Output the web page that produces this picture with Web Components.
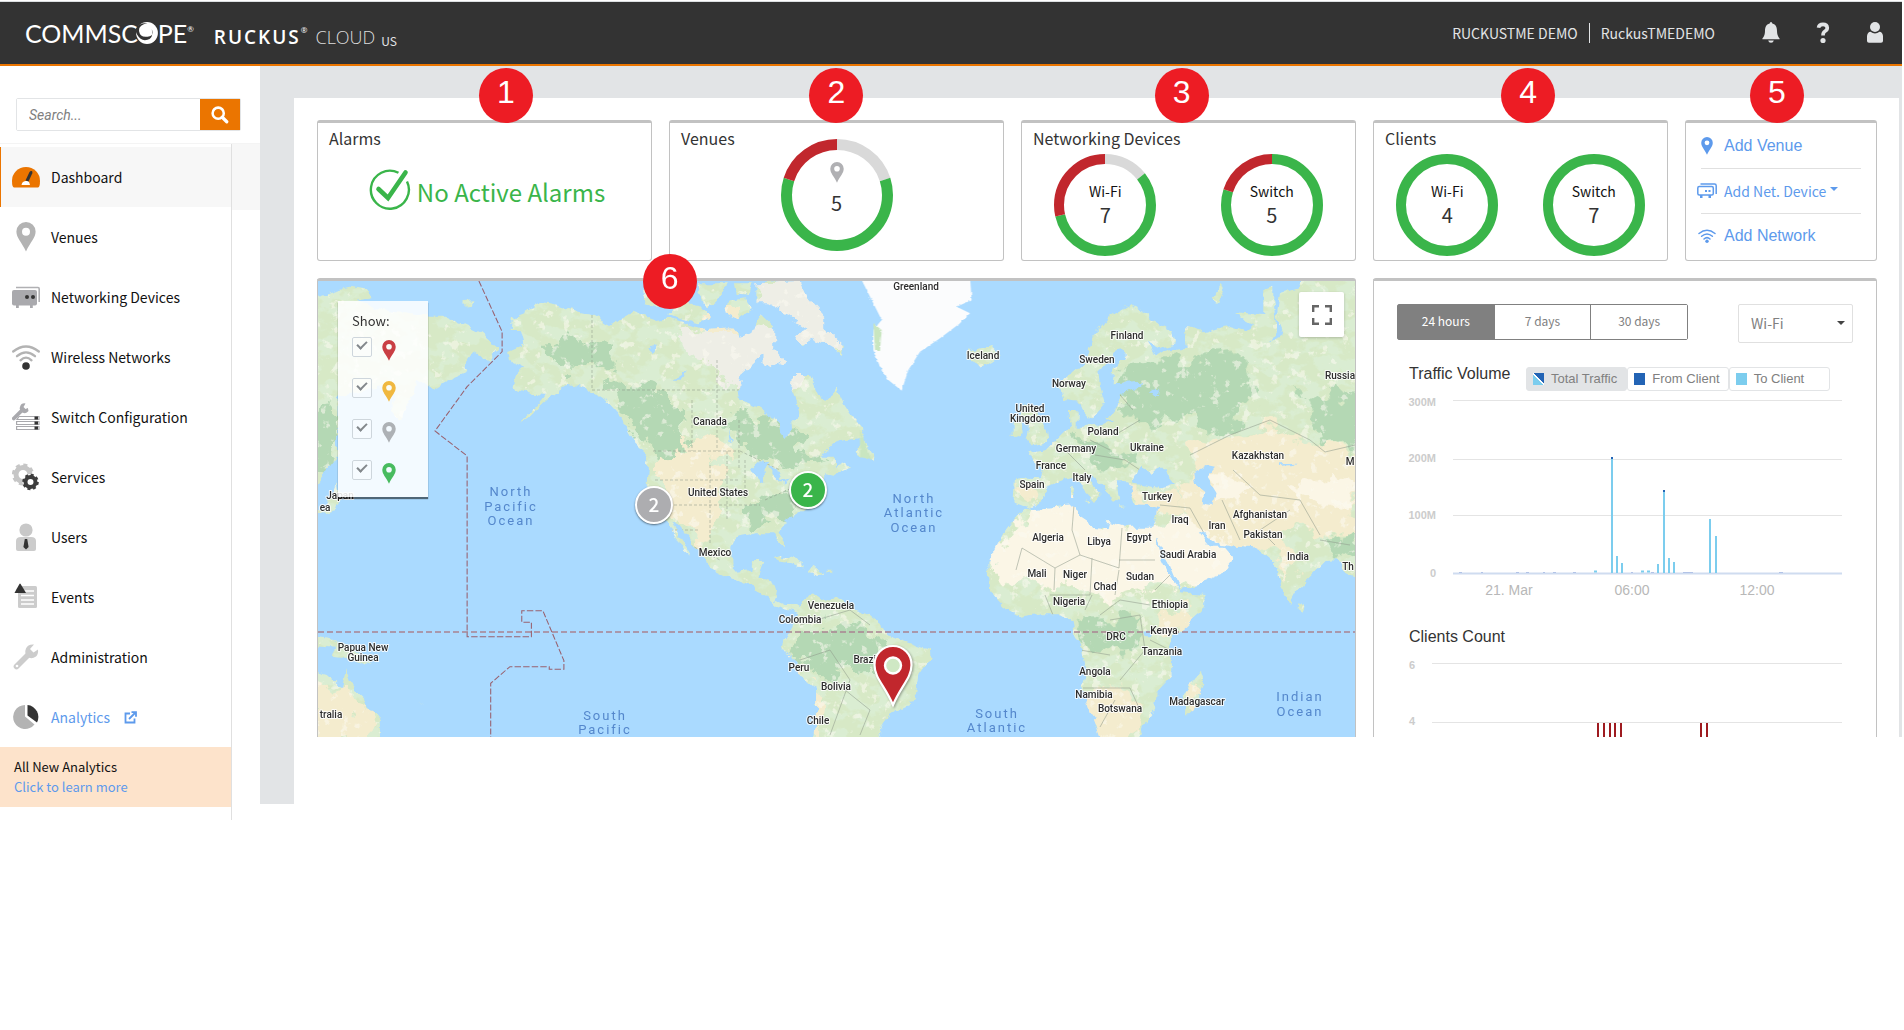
<!DOCTYPE html>
<html lang="en">
<head>
<meta charset="utf-8">
<title>Ruckus Cloud Dashboard</title>
<style>
  :root {
    --ui: "Noto Sans CJK SC", "Noto Sans", sans-serif;
    --plain: "Liberation Sans", Arial, sans-serif;
    --orange: #eb7500;
    --green: #3ab54a;
    --red: #c1272d;
    --link: #5d9aec;
    --edge: #c2c2c2;
    --shade: #e2e4e6;
  }
  body { margin: 0; padding-right: 2px; background: #fff; font-family: var(--ui); font-size: 14px; line-height: 20px; color: #333; }
</style>
</head>
<body>
<ruckus-app></ruckus-app>

<script>
const ICONS = {
  search: ['0 0 20 20', '<circle cx="8" cy="8" r="6.2" fill="none" stroke="#fff" stroke-width="2.8"/><path d="M12.5 12.500l5 5" stroke="#fff" stroke-width="3.6" stroke-linecap="round"/>'],
  dashboard: ['0 0 28 28', '<path d="M2 24.500Q0 24 0 18A14 14 0 0 1 28 18Q28 24 26 24.500z" fill="#eb7500"/><path d="M9.500 22q.5-3.500 4-4h2.500q1.500 1 2 4z" fill="#fff"/><path d="M13.500 17.500l4-8.500q1-1.500 2.200-1t.6 2.200l-3.800 8.300z" fill="#333"/>'],
  pin: ['0 0 20 30', '<path fill-rule="evenodd" d="M10 0a9.600 9.600 0 0 1 9.600 9.600C19.600 16 14.500 20 10 29.500 5.500 20 .4 16 .4 9.600A9.600 9.600 0 0 1 10 0zm0 5.700a4 4 0 1 0 0 8 4 4 0 0 0 0-8z" fill="currentColor"/>'],
  devices: ['0 0 28 28', '<path d="M4 4.500h22q1.200 0 1.200 1.500v13" fill="none" stroke="#b0b0b3" stroke-width="1.600"/><rect y="7" width="25" height="15.500" rx="2" fill="#a9a9ad"/><path d="M4 22h2.800v3H4zM18 22h2.800v3H18z" fill="#a9a9ad"/><circle cx="15" cy="14" r="2" fill="#333"/><circle cx="21" cy="14" r="2" fill="#333"/>'],
  wireless: ['0 0 28 28', '<g fill="none" stroke="#b3b3b3" stroke-linecap="round" stroke-width="2.300"><path d="M1.200 8.500Q14-1.500 26.800 8.500"/><path d="M5 13.200Q14 5.500 23 13.200"/><path d="M8.500 17.300Q14 12 19.500 17.300"/></g><circle cx="14" cy="23" r="3.800" fill="#333"/>'],
  switch: ['0 0 28 28', '<path d="M1.800 15.500l8-8" stroke="#a9a9ad" stroke-width="3.800" stroke-linecap="round"/><path d="M13.500.5a4.800 4.800 0 1 0 3 7.500l-.6-3-2.400 1-2-2z" fill="#a9a9ad"/><g fill="#fff" stroke="#a9a9ad" stroke-width="1.200"><path d="M7 13.500h20v3H5z"/><path d="M4.600 18.500H27v3H4.600zM4.600 23.500H27v3H4.600z"/></g><path d="M22.500 13.500h3.500v3h-3.500zM22.500 18.500h3.500v3h-3.500zM22.500 23.500h3.500v3h-3.500z" fill="#333"/>'],
  services: ['0 0 28 28', '<circle cx="11" cy="11.500" r="7" fill="none" stroke="#c6c6c6" stroke-width="5"/><circle cx="11" cy="11.500" r="9.800" fill="none" stroke="#c6c6c6" stroke-width="2.600" stroke-dasharray="4.100 3.600"/><circle cx="18.500" cy="19" r="8" fill="#fff"/><circle cx="18.500" cy="19" r="5" fill="none" stroke="#3d3d3d" stroke-width="4"/><circle cx="18.500" cy="19" r="7.200" fill="none" stroke="#3d3d3d" stroke-width="2.200" stroke-dasharray="3 2.650"/>'],
  users: ['0 0 28 28', '<circle cx="14" cy="7" r="6.600" fill="#c8c8c8"/><path d="M4 18q0-4 5-4h10q5 0 5 4v8q0 2-2 2H6q-2 0-2-2z" fill="#ccc"/><path d="M12.800 16h2.400l1.400 8-2.600 2.500L11.400 24z" fill="#333"/>'],
  events: ['0 0 28 28', '<rect x="6" y="3" width="19" height="22" rx="1.500" fill="#ccc"/><path d="M9 8h13M9 12.500h13M9 17h13M9 21h13" stroke="#fff" stroke-width="1.700"/><path d="M8 .5q.6 0 6 9.500H2.500Q7.400.5 8 .5z" fill="#333"/>'],
  admin: ['0 0 28 28', '<path d="M4.500 23.500L17 11" stroke="#ccc" stroke-width="5.600" stroke-linecap="round"/><path d="M22 1.500q-6-.6-8 4t1.500 8 8.500 0q2.500-2.500 2-7l-4.500 3-3.500-3.500z" fill="#ccc"/><circle cx="5" cy="23" r="1.300" fill="#fff"/>'],
  analytics: ['0 0 28 28', '<path d="M13 2a12 12 0 1 0 9.500 19.500L13 13.500z" fill="#b3b3b3"/><path d="M15.500 2A12 12 0 0 1 25 19.500l-9.500-7z" fill="#333"/>'],
  external: ['0 0 13 13', '<path d="M6 2.500H1.500v9h9V7.500" fill="none" stroke="#5d9aec" stroke-width="1.800"/><path d="M5 8l6-6M7.500 1.200H12v4.500" fill="none" stroke="#5d9aec" stroke-width="1.800"/>'],
  bell: ['0 0 18 22', '<path d="M9 0q1.200 0 1.300 1.600C14 2.500 15 5.500 15 9q0 5 2.600 7.500v.8H.4v-.8Q3 14 3 9c0-3.500 1-6.500 4.700-7.400Q7.800 0 9 0z" fill="#e2e4e6"/><path d="M6.200 18.500h5.600q-.5 2.300-2.800 2.300t-2.800-2.300z" fill="#e2e4e6"/>'],
  help: ['0 0 14 22', '<path d="M2.500 5.800Q3 2.400 7 2.400t4.300 3.400Q11.300 8 9 9.300 7 10.400 7 13.500" fill="none" stroke="#e2e4e6" stroke-width="3.600"/><circle cx="7" cy="18.500" r="2.600" fill="#e2e4e6"/>'],
  user: ['0 0 18 22', '<circle cx="9" cy="5" r="5" fill="#e2e4e6"/><path d="M1 14q.5-4 3.500-4.200Q9 13 13.500 9.800 16.500 10 17 14v5q0 1.800-2 1.800H3Q1 20.800 1 19z" fill="#e2e4e6"/>'],
  check: ['0 0 42 42', '<path d="M29.500 3.800A19 19 0 1 0 38 12.500" fill="none" stroke="#3ab54a" stroke-width="2.400"/><path d="M9.500 20l9.500 9L36.500 3.500" fill="none" stroke="#3ab54a" stroke-width="4.600" stroke-linecap="round"/>'],
  addDevice: ['0 0 20 16', '<g fill="none" stroke="#5d9aec" stroke-width="1.500"><path d="M3.500 1h14q1.700 0 1.700 1.700V11"/><rect x=".8" y="3.500" width="15.500" height="8.500" rx="1.500"/></g><path d="M3 12h2.500v3H3zM11.500 12H14v3h-2.500zM8 7h2v2H8zM11.500 7h2v2h-2z" fill="#5d9aec"/>'],
  addWifi: ['0 0 18 14', '<g fill="none" stroke="#5d9aec" stroke-linecap="round" stroke-width="1.500"><path d="M1 4.500Q9-2 17 4.500"/><path d="M3.600 7.300Q9 2.600 14.400 7.300"/><path d="M6 10Q9 7.200 12 10"/></g><circle cx="9" cy="12.200" r="1.700" fill="#5d9aec"/>'],
  full: ['0 0 20 20', '<path d="M1.200 7V1.200H7M13 1.200h5.800V7M18.800 13v5.800H13M7 18.800H1.200V13" fill="none" stroke="#666" stroke-width="2.400"/>'],
  marker: ['0 0 42 66', '<path d="M21 2A18.500 18.500 0 0 1 39.500 21C39.500 34 29 42 21 61 13 42 2.500 34 2.500 21A18.500 18.500 0 0 1 21 2z" fill="#c1272d" stroke="#fff" stroke-width="2.200"/><circle cx="21" cy="21.500" r="8" fill="#cfe8c4" stroke="#fff" stroke-width="2.400"/>']
};

const define = (name, html, setup) => customElements.define(name, class extends HTMLElement {
  connectedCallback() {
    if (this.shadowRoot) return;
    const root = this.attachShadow({ mode: 'open' });
    root.innerHTML = typeof html === 'function' ? html(this) : html;
    if (setup) setup(root, this);
  }
});

define('rk-icon', el => {
  const [box, body] = ICONS[el.getAttribute('name')];
  return `<style>:host{display:inline-flex;flex:none}svg{display:block;width:100%;height:100%}</style>
    <svg viewBox="${box}" aria-hidden="true">${body}</svg>`;
});

define('rk-header', `
<style>
  :host { display: block; border-top: 1px solid #dcdfe1; margin-top: 1px; }
  header { display: flex; align-items: center; height: 62px; background: #333; border-bottom: 2px solid var(--orange); color: #fff; padding: 0 18px 0 25px; box-sizing: content-box; }
  .brand { position: relative; font: 25px/30px Lato, sans-serif; margin-top: -1px; }
  .brand svg { position: absolute; left: 111px; top: 4px; width: 22px; height: 22px; }
  sup { font-size: 8px; line-height: 8px; vertical-align: 11px; font-weight: 400; letter-spacing: 0; }
  .product { display: flex; align-items: baseline; margin-left: 20px; padding-top: 7px; }
  .product b { font: 600 19px/24px "Open Sans", sans-serif; letter-spacing: 2px; }
  .product span { font: 300 18px/24px "Open Sans", sans-serif; margin-left: 8px; color: #ddd; }
  .product small { font: 12px/14px var(--ui); margin-left: 6px; padding-top: 2px; color: #e2e4e6; align-self: center; position: relative; top: 3px; }
  .account { margin-left: auto; display: flex; align-items: center; color: #e2e4e6; }
  .account span { padding: 0 11px; line-height: 20px; }
  .account span + span { border-left: 1px solid #e2e4e6; }
  button { background: none; border: 0; padding: 0; display: flex; }
  nav { display: flex; align-items: center; gap: 36px; margin-left: 36px; }
</style>
<header>
  <div class="brand">COMMSCOPE<sup>®</sup>
    <svg viewBox="0 0 21 21" aria-hidden="true"><circle cx="10.500" cy="10.500" r="10.400" fill="#fff"/><path d="M11 1Q2 3 3 9t8 5 4-7q2 8-4 10T1 12 6 1.500z" fill="#333"/></svg>
  </div>
  <div class="product"><b>RUCKUS<sup>®</sup></b><span>CLOUD</span><small>US</small></div>
  <div class="account"><span>RUCKUSTME DEMO</span><span>RuckusTMEDEMO</span></div>
  <nav>
    <button aria-label="Notifications"><rk-icon name="bell" style="width:18px;height:22px"></rk-icon></button>
    <button aria-label="Help"><rk-icon name="help" style="width:14px;height:22px"></rk-icon></button>
    <button aria-label="Account"><rk-icon name="user" style="width:18px;height:22px"></rk-icon></button>
  </nav>
</header>`);

define('rk-nav-item', el => `
<style>
  :host { display: block; }
  a { display: flex; align-items: center; height: 60px; padding-left: 11px; gap: 11px; border-left: 1px solid transparent; color: #111; text-decoration: none; }
  :host([active]) a { background: #f7f7f7; border-left-color: var(--orange); }
  :host([external]) a { color: var(--link); }
  .box { width: 28px; height: 30px; display: flex; align-items: center; justify-content: center; color: #b3b3b3; }
</style>
<a href="#"><span class="box"><rk-icon name="${el.getAttribute('icon')}" style="${el.getAttribute('icon') === 'pin' ? 'width:20px;height:30px' : 'width:28px;height:28px'}"></rk-icon></span>
<slot></slot>${el.hasAttribute('external') ? '<rk-icon name="external" style="width:13px;height:13px;margin-left:3px"></rk-icon>' : ''}</a>`);

define('rk-sidebar', `
<style>
  :host { display: block; width: 260px; flex: none; }
  form { display: flex; height: 31px; margin: 32px 19px 12px 16px; border: 1px solid #e2e4e6; border-radius: 2px; }
  input { flex: 1; min-width: 0; border: 0; padding: 0 12px; outline: 0; font: italic 14px/20px Roboto, sans-serif; }
  input::placeholder { color: #808080; opacity: 1; }
  form button { width: 40px; border: 0; padding: 0; background: var(--orange); display: flex; align-items: center; justify-content: center; }
  .rail { display: flex; align-items: flex-start; border-top: 1px solid #f4f4f4; }
  nav { flex: 1; border-right: 1px solid #e0e0e0; padding: 3px 0 13px; }
  .tab { width: 28px; height: 66px; background: #f7f7f7; }
  .promo { background: #fde3cb; height: 60px; box-sizing: border-box; padding: 10px 14px; font-size: 13px; line-height: 20px; color: #111; }
  .promo a { display: block; color: var(--link); text-decoration: none; }
</style>
<form onsubmit="return false"><input type="text" aria-label="Search" placeholder="Search..."><button aria-label="Run search"><rk-icon name="search" style="width:18px;height:18px"></rk-icon></button></form>
<div class="rail"><nav>
  <rk-nav-item icon="dashboard" active>Dashboard</rk-nav-item>
  <rk-nav-item icon="pin">Venues</rk-nav-item>
  <rk-nav-item icon="devices">Networking Devices</rk-nav-item>
  <rk-nav-item icon="wireless">Wireless Networks</rk-nav-item>
  <rk-nav-item icon="switch">Switch Configuration</rk-nav-item>
  <rk-nav-item icon="services">Services</rk-nav-item>
  <rk-nav-item icon="users">Users</rk-nav-item>
  <rk-nav-item icon="events">Events</rk-nav-item>
  <rk-nav-item icon="admin">Administration</rk-nav-item>
  <rk-nav-item icon="analytics" external>Analytics</rk-nav-item>
  <div class="promo">All New Analytics<a href="#">Click to learn more</a></div>
</nav><div class="tab"></div></div>`);

define('rk-card', el => `
<style>
  :host { display: flex; flex-direction: column; box-sizing: border-box; border: 1px solid var(--edge); border-top-width: 3px; border-radius: 3px; min-width: 0; position: relative; }
  :host([open]) { border-bottom: 0; border-radius: 3px 3px 0 0; }
  h2 { position: absolute; left: 11px; top: 5px; margin: 0; font-weight: 400; font-size: 16px; line-height: 20px; }
</style>
${el.hasAttribute('heading') ? `<h2>${el.getAttribute('heading')}</h2>` : ''}<slot></slot>`);

define('rk-donut', el => {
  const size = +el.getAttribute('size'), w = +el.getAttribute('ring'), r = (size - w) / 2, c = size / 2;
  let at = 0;
  const arcs = el.getAttribute('parts').split(' ').map(p => {
    const [color, share] = p.split(':');
    const arc = `<circle cx="${c}" cy="${c}" r="${r}" pathLength="1000" stroke="${color}" stroke-width="${w}" stroke-dasharray="${share} 1000" stroke-dashoffset="${-at}"/>`;
    at += +share;
    return arc;
  }).join('');
  return `<style>
    :host { display: grid; place-items: center; width: ${size}px; height: ${size}px; }
    svg, div { grid-area: 1 / 1; }
    g { transform: rotate(-90deg); transform-origin: center; fill: none; }
    div { display: flex; flex-direction: column; align-items: center; color: #111; line-height: 20px; padding-bottom: var(--lift, 0); }
    strong { font-weight: 400; font-size: 20px; line-height: 28px; color: #333; }
  </style>
  <svg width="${size}" height="${size}" aria-hidden="true"><g>${arcs}</g></svg>
  <div><slot></slot><strong>${el.getAttribute('value')}</strong></div>`;
});

define('rk-callout', `
<style>
  :host { position: absolute; left: var(--x); top: var(--y, -30px); transform: translateX(-50%); z-index: 5; width: 54px; height: 55px; border-radius: 50%; background: #ed1c24; color: #fff; text-align: center; font: 32px/48px var(--plain); }
</style><slot></slot>`);

define('rk-actions', `
<style>
  :host { display: flex; flex-direction: column; margin: 1px 15px 0; }
  div { display: flex; align-items: center; height: 44px; gap: 11px; }
  div:first-child { box-sizing: border-box; padding-top: 4px; }
  div + div { border-top: 1px solid #e0e0e0; }
  .lead { width: 12px; display: flex; justify-content: center; color: var(--link); }
  a, button { color: var(--link); text-decoration: none; font: 16px/20px var(--plain); background: none; border: 0; padding: 0; white-space: nowrap; }
  button { display: flex; align-items: center; gap: 4px; font: 14px/20px var(--ui); }
  i { border: 4px solid transparent; border-top-color: currentColor; border-bottom: 0; margin-top: -4px; }
</style>
<div><span class="lead"><rk-icon name="pin" style="width:12px;height:18px"></rk-icon></span><a href="#">Add Venue</a></div>
<div><span class="lead"><rk-icon name="addDevice" style="width:20px;height:16px"></rk-icon></span><button>Add Net. Device<i></i></button></div>
<div><span class="lead"><rk-icon name="addWifi" style="width:18px;height:14px"></rk-icon></span><a href="#">Add Network</a></div>`);

const COUNTRIES = [
  ['Canada',710,422],['United States',718,493],['Mexico',715,553],['Venezuela',831,606],['Colombia',800,620],['Peru',799,668],['Bolivia',836,687],['Brazil',866,660],['Chile',818,721],
  ['Papua New',363,648],['Guinea',363,658],['Japan',340,496],['Greenland',916,287],['Iceland',983,356],['Finland',1127,336],['Sweden',1097,360],['Norway',1069,384],
  ['United',1030,409],['Kingdom',1030,419],['Poland',1103,432],['Germany',1076,449],['Ukraine',1147,448],['France',1051,466],['Italy',1082,478],['Spain',1032,485],
  ['Kazakhstan',1258,456],['Turkey',1157,497],['Afghanistan',1260,515],['Iraq',1180,520],['Iran',1217,526],['Pakistan',1263,535],['India',1298,557],['Algeria',1048,538],
  ['Libya',1099,542],['Egypt',1139,538],['Saudi Arabia',1188,555],['Mali',1037,574],['Niger',1075,575],['Sudan',1140,577],['Chad',1105,587],['Nigeria',1069,602],
  ['Ethiopia',1170,605],['Kenya',1164,631],['DRC',1116,637],['Tanzania',1162,652],['Angola',1095,672],['Namibia',1094,695],['Botswana',1120,709],['Madagascar',1197,702],
  ['Russia',1340,376],['ea',325,508],['tralia',331,715],['M',1350,462],['Th',1348,567]
];
const OCEANS = [
  ['North',511,492],['Pacific',511,507],['Ocean',511,521],['South',605,716],['Pacific',605,730],['North',914,499],['Atlantic',914,513],['Ocean',914,528],
  ['South',997,714],['Atlantic',997,728],['Indian',1300,697],['Ocean',1300,712]
];
const label = ([t, x, y], dy) => `<text x="${x}" y="${y + dy}">${t}</text>`;

// Land west of the mid-Atlantic
const WEST = `
  M0 85L75 60 110 50 165 60 172 85 130 92 200 120 330 140 380 140 430 165 480 190 530 235 500 272 460 245 430 290 435 310 390 330 345 358 300 330 290 370 250 450 225 420 240 370 200 350 78 380 75 560 20 640 0 640z
  M85 690L75 720 50 725 0 745V735L45 712 78 640z
  M565 145L600 130 650 97 690 105 730 120 790 135 840 165 905 125 970 150 1010 145 1070 165 1110 180 1180 175 1200 200 1240 190 1262 130 1300 170 1300 230 1250 270 1210 310 1200 360 1205 390 1250 410 1310 450 1320 490 1335 507 1347 480 1345 450 1370 430 1365 400 1350 360 1355 315 1400 315 1415 350 1430 385 1455 390 1475 355 1495 400 1520 440 1550 480 1540 505 1500 510 1465 520 1430 560 1470 560 1470 590 1500 580 1515 590 1470 615 1440 610 1440 640 1400 690 1395 710 1370 730 1330 755 1312 785 1330 810 1330 835 1312 815 1300 790 1250 790 1195 800 1180 830 1180 880 1200 905 1235 900 1240 877 1272 875 1260 910 1255 925 1300 940 1305 960 1300 990 1330 1005 1360 1005 1375 1010 1405 970 1430 990 1480 985 1530 1020 1568 1035 1600 1060 1605 1090 1670 1115 1736 1140 1738 1165 1703 1220 1698 1270 1675 1305 1628 1330 1600 1380 1582 1420H1410L1420 1330 1420 1260 1380 1220 1350 1170 1325 1130 1345 1080 1370 1030 1330 1018 1310 1005 1280 975 1240 952 1190 930 1120 895 1100 860 1060 800 1035 765 1015 755 1035 800 1065 858 1040 835 1018 785 1005 755 980 735 960 700 940 650 945 560 935 545 910 520 880 460 865 430 840 400 790 365 750 350 720 345 690 365 650 400 620 440 585 458 620 425 650 390 660 375 610 370 570 350 580 310 600 290 560 270 555 240 600 220 590 180 562 180z
  M930 60L1000 40 1020 80 990 115 940 100zM1000 130L1040 95 1090 105 1120 140 1090 160 1040 150zM1090 40L1170 40 1150 80 1110 110 1085 70zM1170 95L1220 85 1240 120 1200 150 1160 130zM1190 40L1240 40 1230 75 1195 70z
  M1250 40L1370 33 1390 80 1440 140 1440 170 1495 225 1490 252 1440 220 1400 200 1380 230 1360 200 1390 175 1330 130 1280 100 1250 100zM1270 240L1300 235 1330 270 1290 295 1270 280z
  M1525 545L1550 510 1575 540 1580 570 1540 560z
  M1300 865L1320 858 1360 872 1388 892 1365 890 1335 876zM1395 905L1405 890 1435 905 1440 914 1410 914zM1452 905H1468V911H1452z
  M0 1095L60 1105 110 1130 170 1185 110 1165 60 1160 70 1130 0 1125z
  M0 1200L50 1215 90 1255 100 1195 125 1265 160 1300 195 1350 202 1420H0z
  M430 90L455 88 450 102 430 104zM300 1290L320 1305 312 1300z`;
// Land east of the mid-Atlantic
const EAST = `
  M460 700L465 625 540 628 545 600 505 550 560 540 590 510 620 480 635 465 630 420 650 420 650 470 680 470 730 465 760 450 690 440 670 420 665 395 610 390 600 350 620 320 680 270 700 200 750 140 810 105 850 125 880 150 940 185 945 220 900 235 860 215 890 260 920 240 930 235 980 230 975 180 1000 175 1030 190 1110 165 1160 180 1180 165 1115 130 1210 135 1210 60 1240 50 1240 90 1250 180 1230 215 1270 190 1250 140 1260 70 1320 50 1330 20H1500V930L1450 900 1430 868 1400 870 1380 890 1320 950 1290 1005 1260 950 1245 880 1210 850 1180 835 1130 830 1085 825 1045 800 1015 785 1050 830 1090 830 1120 865 1080 915 962 962 955 940 930 880 885 800 880 770 890 740 895 712 870 705 820 703 808 670 820 650 800 640 770 640 778 690 762 702 740 660 700 620 680 608 690 640 722 672 700 702 692 675 640 620 600 630 560 650 545 690 500 715z
  M490 720L545 715 650 705 655 740 700 770 740 775 745 755 790 770 880 770 885 800 905 870 930 920 965 970 1040 975 1020 1030 940 1100 930 1130 935 1220 890 1270 885 1320 850 1370 830 1420H725L690 1330 665 1250 680 1200 665 1130 640 1090 635 1050 600 1030 540 1030 480 1040 430 1010 390 960 385 880 430 790 460 750z
  M1020 1205L1030 1235 1000 1330 972 1330 975 1270zM1318 1000L1334 1010 1328 1025 1316 1018z
  M320 265L325 232 350 242 400 228 420 255 370 290z
  M515 405L490 400 480 440 510 470 500 500 520 525 565 515 560 480 540 450 530 420zM455 460L485 455 488 490 455 502z
  M630 655L642 655 640 680 630 678zM670 695L695 692 690 706zM780 712L800 714 782 718z
  M1060 80L1080 40 1090 60 1075 100zM975 175L990 175 985 200z`;
const WATER_EAST = `
  M715 300L735 290 765 245 790 240 795 260 760 300 755 340 850 335 820 362 780 372 770 410 740 450 700 445 735 400 720 350z
  M815 640L840 590 870 605 905 590 945 640 900 655 850 645zM1000 610L1040 585 1065 590 1040 620 1070 670 1060 705 1025 700 1030 660 1005 640z
  M1260 580L1310 578 1300 585 1260 588zM850 1085L875 1080 875 1105 855 1105zM870 370L895 350 890 375z`;
const WATER_WEST = `M940 240L975 220 960 250zM1015 335L1065 300 1040 335zM1170 470L1185 520 1175 510zM1240 590L1265 565 1290 580 1270 595 1272 640 1262 635zM1285 590L1310 600 1318 640 1300 620zM1310 640L1345 625 1330 640z`;

define('rk-map', `
<style>
  :host { display: block; position: relative; overflow: hidden; height: 456px; background: #aadaff; }
  .world { display: block; width: 100%; height: 100%; }
  .names { font: 500 10px Roboto, sans-serif; fill: #2d2d2d; text-anchor: middle; paint-order: stroke; stroke: #fff; stroke-opacity: .85; stroke-width: 2px; stroke-linejoin: round; }
  .seas { font: 400 13px Roboto, sans-serif; fill: #5487cc; text-anchor: middle; letter-spacing: 2px; }
  .cluster { position: absolute; box-sizing: border-box; width: 38px; height: 38px; border: 2px solid #fff; border-radius: 50%; color: #fff; font: 500 19px/31px var(--ui); text-align: center; padding: 0 0 3px; box-shadow: 0 1px 2px #0008; }
  .pin { position: absolute; left: 554px; top: 363px; width: 42px; height: 66px; filter: drop-shadow(1px 1px 1px #0005); }
  fieldset { position: absolute; left: 20px; top: 20px; width: 90px; height: 196px; box-sizing: border-box; margin: 0; border: 0; padding: 10px 14px; background: #ffffffdc; box-shadow: 0 2px 1px #0008; display: flex; flex-direction: column; }
  .title { font-size: 13px; line-height: 20px; margin-bottom: 6px; }
  label { display: flex; align-items: center; height: 20px; margin-bottom: 21px; gap: 10px; }
  label rk-icon { margin-top: 6px; }
  input { appearance: none; flex: none; box-sizing: border-box; width: 20px; height: 20px; margin: 0; border: 1px solid #ced6dc; border-radius: 2px; background: #ffffff40; display: grid; place-items: center; }
  input:checked::before { content: ""; width: 8px; height: 4px; border: solid #83888c; border-width: 0 0 2px 2px; transform: translateY(-3px) rotate(-45deg); }
  .full { position: absolute; right: 11px; top: 11px; width: 45px; height: 45px; border: 0; border-radius: 2px; background: #fff; display: flex; align-items: center; justify-content: center; padding: 0; box-shadow: 0 1px 3px #0003; }
</style>
<svg class="world" viewBox="318 281 1038 456" preserveAspectRatio="xMinYMin slice" role="img" aria-label="World map of venues">
  <defs>
    <filter id="coast" x="-5%" y="-5%" width="110%" height="110%"><feTurbulence type="fractalNoise" baseFrequency=".09" numOctaves="3" seed="4" result="n"/><feDisplacementMap in="SourceGraphic" in2="n" scale="9" xChannelSelector="R" yChannelSelector="G"/></filter>
    <filter id="patch" x="-5%" y="-5%" width="110%" height="110%"><feTurbulence type="fractalNoise" baseFrequency=".05" numOctaves="4" seed="9" result="n"/><feDisplacementMap in="SourceGraphic" in2="n" scale="38" xChannelSelector="R" yChannelSelector="G"/></filter>
    <filter id="relief" x="0" y="0" width="100%" height="100%"><feTurbulence type="fractalNoise" baseFrequency=".05 .07" numOctaves="4" seed="21"/><feColorMatrix values="0 0 0 0 .72  0 0 0 0 .88  0 0 0 0 .7  9 0 0 0 -4.200"/></filter>
    <filter id="peaks" x="0" y="0" width="100%" height="100%"><feTurbulence type="fractalNoise" baseFrequency=".1" numOctaves="4" seed="5"/><feColorMatrix values="0 0 0 0 .97  0 0 0 0 .96  0 0 0 0 .87  0 10 0 0 -6.200"/></filter>
    <mask id="land" maskUnits="userSpaceOnUse" x="300" y="270" width="1070" height="480"><g filter="url(#coast)"><rect x="300" y="270" width="1070" height="480" fill="#000"/>
      <g transform="translate(310 270) scale(.3571 .3333)"><path fill="#fff" d="${WEST}"/><path fill="#000" d="${WATER_WEST}"/></g>
      <g transform="translate(860 270) scale(.3333)"><path fill="#fff" d="${EAST}"/><path fill="#000" d="${WATER_EAST}"/></g></g></mask>
  </defs>
  <g mask="url(#land)">
    <rect x="300" y="270" width="1070" height="480" fill="#d7e9c6"/>
    <rect x="300" y="270" width="1070" height="480" filter="url(#relief)" opacity=".6"/>
    <g filter="url(#patch)">
      <g transform="translate(310 270) scale(.3571 .3333)">
        <path fill="#eeeee6" d="M1040 200L1110 170 1330 190 1400 300 1380 350 1200 340 1140 330 1120 280 1060 260zM1250 30H1500V240H1380L1260 120z"/>
        <path fill="#b4d8b4" d="M830 330L1000 370 1060 440 1040 560 960 570 900 460zM1180 430L1300 450 1420 540 1440 570 1350 600 1240 560 1190 520zM1290 660L1400 640 1350 740 1220 780 1210 740zM1360 1070L1540 1060 1620 1120 1600 1200 1420 1220 1350 1150zM0 430L80 420 60 560 0 620zM640 240L720 200 850 240 850 290 720 300z"/>
        <path fill="#f4ecce" d="M980 560L1060 540 1160 590 1150 700 1110 800 1100 830 1040 780 980 700zM1040 500L1140 500 1180 560 1060 560zM1330 1120L1360 1200 1440 1260 1430 1410H1400L1400 1280 1350 1210zM0 1230L90 1270 170 1330 170 1420H0zM1100 120H1200V180H1100z"/>
      </g>
      <g transform="translate(860 270) scale(.3333)">
        <path fill="#b4d8b4" d="M760 330L900 270 1150 250 1180 380 1110 480 980 450 820 460zM1330 380H1500V520L1390 530zM620 480L720 530 820 560 800 610 700 580zM640 1050L840 1040 840 1130 740 1150 650 1120zM1400 810L1500 790V860L1440 850z"/>
        <path fill="#f4ecce" d="M1000 530L1130 490 1230 460 1340 520 1500 540V800L1380 800 1280 750 1270 850 1190 830 1040 830 960 700 980 620zM800 670L960 660 960 720 820 710zM660 1260L780 1250 860 1330 820 1420H700zM960 1280L1000 1220 1000 1340zM470 640L550 640 520 700zM880 1030L1000 1000 1000 1060 930 1100zM1240 820L1330 860 1290 960z"/>
        <path fill="#fbf6e6" d="M400 860L480 740 640 700 780 770 900 770 960 720 1030 790 1140 840 1100 930 960 960 880 950 760 980 640 950 500 940 400 930zM1280 650L1430 620 1500 680 1480 720 1330 700zM1050 600L1190 650 1160 690 1060 680z"/>
      </g>
    </g>
    <rect x="300" y="270" width="1070" height="480" filter="url(#peaks)" opacity=".55"/>
    <g fill="none" stroke="#8f9a8c" stroke-opacity=".55" stroke-width="1">
      <path d="M592 315V390H739M653 451H739" stroke-dasharray="3 2"/>
      <path d="M692 400V451M717 360V451M739 420V470M655 480H740M669 505H760M670 530H700M710 465V545M727 451V520M745 460V500M690 545L720 560M765 500L810 480M740 451L780 470" stroke-dasharray="3 2"/>
      <path d="M1016 570L1022 548 1055 568 1054 590M1055 568L1080 555 1072 530 1074 505M1080 555L1119 568 1122 528M1119 560H1155M1092 558L1090 595 1050 595M1115 595L1119 570M1155 590L1170 575M1045 595L1053 615M1092 595L1085 610M1100 615L1120 600 1150 605M1110 620L1140 615 1145 650 1120 680M1080 650L1110 655M1083 688H1130L1140 710M1100 727L1115 700M1150 640L1170 650M1160 505L1190 508 1205 535M1222 500L1240 540M1190 455L1230 435 1270 420 1310 440 1325 452M1325 452L1355 445M1233 470L1260 495 1300 500 1320 535M1275 545L1260 530 1290 510M1320 540L1350 545M1060 445L1085 470M1095 455L1125 460 1140 470M1115 435L1140 420M1090 440L1110 450M1133 410L1120 395"/>
      <path d="M800 625L850 610 870 625M800 660L830 650 850 680 830 735M845 690L870 710 860 735"/>
    </g>
  </g>
  <g transform="translate(860 270) scale(.3333)" filter="url(#coast)"><path fill="#fbfcfd" d="M0 20L20 60 50 120 65 150 40 180 40 240 60 290 85 330 125 362 145 300 180 245 240 205 300 160 330 130 290 110 335 90 330 20z"/><path fill="#c9e6c0" d="M40 160L65 180 60 240 45 240zM0 480L15 520 35 570 0 560z"/></g>
  <path d="M318 632H1356" stroke="#a98391" stroke-width="1.500" stroke-dasharray="6 3"/>
  <path transform="translate(310 270) scale(.3571 .3333)" d="M473 33L538 185V245L440 350 350 483 440 558V1100H620V1057H593V1022H652L711 1172V1198H670V1190H560L506 1240V1401" fill="none" stroke="#99616f" stroke-width="3" stroke-dasharray="18 6"/>
  <g class="names">${COUNTRIES.map(c => label(c, 3)).join('')}</g>
  <g class="seas">${OCEANS.map(c => label(c, 4)).join('')}</g>
</svg>
<rk-icon class="pin" name="marker"></rk-icon>
<button class="cluster" style="left:317px;top:205px;background:#adadb0">2</button>
<button class="cluster" style="left:471px;top:190px;background:var(--green)">2</button>
<fieldset>
  <span class="title">Show:</span>
  <label><input type="checkbox" checked aria-label="Alarmed venues"><rk-icon name="pin" style="width:14px;height:21px;color:#c93f44"></rk-icon></label>
  <label><input type="checkbox" checked aria-label="Warned venues"><rk-icon name="pin" style="width:14px;height:21px;color:#f0b840"></rk-icon></label>
  <label><input type="checkbox" checked aria-label="Venues in setup"><rk-icon name="pin" style="width:14px;height:21px;color:#adb1b5"></rk-icon></label>
  <label><input type="checkbox" checked aria-label="Operational venues"><rk-icon name="pin" style="width:14px;height:21px;color:#48bb5f"></rk-icon></label>
</fieldset>
<button class="full" aria-label="Full screen"><rk-icon name="full" style="width:20px;height:20px"></rk-icon></button>`);

// [x, top] of each bar on the traffic chart; the base line is at 196
const TRAFFIC = [[214,81],[219,179],[224,186],[260,187],[266,114],[271,181],[276,185],[312,142],[318,159]];

define('rk-traffic', `
<style>
  :host { display: block; padding: 23px 23px 0; height: 433px; overflow: hidden; font-family: var(--plain); }
  .controls { display: flex; justify-content: space-between; align-items: flex-start; }
  .range { display: flex; width: 291px; height: 36px; box-sizing: border-box; border: 1px solid #808080; border-radius: 2px; }
  .range button { flex: 1; border: 0; padding: 0 0 2px; background: #fff; color: #808080; font: 12px/18px var(--ui); }
  .range button + button { border-left: 1px solid #808080; }
  .range .on { background: #808080; color: #fff; }
  .pick { position: relative; }
  .pick::after { content: ""; position: absolute; right: 8px; top: 17px; border: 4px solid transparent; border-top-color: #444; border-bottom: 0; }
  select { appearance: none; display: block; box-sizing: border-box; width: 115px; height: 39px; border: 1px solid #e0e0e0; border-radius: 2px; background: #fff; padding: 0 12px 2px; font: 14px/20px var(--ui); color: #808080; }
  .head { display: flex; margin: 24px 0 0 12px; }
  h3 { margin: 0; font-weight: 400; font-size: 16px; line-height: 20px; }
  .head h3 { width: 117px; margin-top: -3px; }
  .key { display: flex; width: 304px; }
  .key button { flex: 1; display: flex; align-items: center; gap: 7px; height: 24px; box-sizing: border-box; border: 1px solid #e2e4e6; border-radius: 3px; background: #fff; padding: 0 5px 0 6px; font: 13px/20px var(--plain); color: #808080; white-space: nowrap; }
  .key .on { background: #e2e4e6; }
  .key i { width: 11px; height: 12px; flex: none; }
  svg { display: block; width: 100%; overflow: visible; }
  .grid { stroke: #e4e4e4; }
  .y { font: 700 11px var(--plain); fill: #ccc; text-anchor: end; }
  .x { font: 14px var(--plain); fill: #b8b8b8; text-anchor: middle; }
</style>
<div class="controls">
  <div class="range"><button class="on">24 hours</button><button>7 days</button><button>30 days</button></div>
  <div class="pick"><select aria-label="Traffic type"><option>Wi-Fi</option><option>Switch</option></select></div>
</div>
<div class="head"><h3>Traffic Volume</h3><div class="key">
  <button class="on"><i style="background:linear-gradient(45deg,#7ccdee 46%,#fff 46% 54%,#2364b5 54%)"></i>Total Traffic</button>
  <button><i style="background:#2364b5"></i>From Client</button>
  <button><i style="background:#7ccdee"></i>To Client</button>
</div></div>
<svg viewBox="0 0 456 236" role="img" aria-label="Traffic volume by hour">
  <path class="grid" d="M56 9.500H445M56 68.500H445M56 124.500H445"/><path d="M56 182.500H445" stroke="#cfdcf0" stroke-width="2"/>
  <g class="y"><text x="39" y="15">300M</text><text x="39" y="71">200M</text><text x="39" y="128">100M</text><text x="39" y="186">0</text></g>
  <g class="x"><text x="112" y="204">21. Mar</text><text x="235" y="204">06:00</text><text x="360" y="204">12:00</text></g>
  <g fill="#7ccdee">${TRAFFIC.map(([x, t]) => `<rect x="${x}" y="${t - 14}" width="2" height="${196 - t}"/>`).join('')}</g>
  <path d="M214 66h2v2h-2zM266 99h2v2h-2z" fill="#2364b5"/>
  <path d="M62 181.500h3M84 181.500h2M119 181.500h3M129 181.500h3M146 181.500h2M156 181.500h3M176 181.500h3M234 181.500h2M254 181.500h3M286 181.500h10M382 181.500h4" stroke="#8fa6dc" stroke-opacity=".6"/>
  <path d="M197 180.500h3M244 180.500h3M250 180.500h3" stroke="#7ccdee" stroke-width="2"/>
</svg>
<h3 style="margin:0 0 0 12px">Clients Count</h3>
<svg viewBox="0 0 456 100" role="img" aria-label="Clients count by hour">
  <path class="grid" d="M35 16.500H445M35 75.500H445"/>
  <g class="y"><text x="18" y="22">6</text><text x="18" y="78">4</text></g>
  <path d="M201 76v24M207 76v24M213 76v24M218 76v24M224 76v24M304 76v24M310 76v24" stroke="#9e1b20" stroke-width="2"/>
</svg>`);

define('ruckus-app', `
<style>
  :host { display: block; }
  .shell { display: flex; align-items: flex-start; }
  main { flex: 1; min-width: 0; border: solid var(--shade); border-width: 32px 0 0 34px; padding-bottom: 67px; }
  .content { position: relative; display: grid; grid-template-columns: 335fr 335fr 335fr 295fr 192fr; grid-template-rows: 141px auto; gap: 17px; padding: 22px 22px 0 23px; border-right: 3px solid var(--shade); }
  .map { grid-column: span 3; }
  .chart { grid-column: span 2; }
  .alarm { display: flex; justify-content: center; align-items: center; gap: 6px; height: 137px; padding-left: 5px; font-size: 24px; line-height: 30px; color: var(--green); }
  .alarm rk-icon { margin-bottom: 3px; }
  .one { display: flex; justify-content: center; padding-top: 16px; }
  .one rk-donut { --lift: 11px; }
  .one rk-icon { margin-bottom: 6px; }
  .two { display: flex; justify-content: space-around; padding-top: 31px; }
</style>
<rk-header></rk-header>
<div class="shell">
  <rk-sidebar></rk-sidebar>
  <main><div class="content">
    <rk-card heading="Alarms"><div class="alarm"><rk-icon name="check" style="width:42px;height:42px"></rk-icon>No Active Alarms</div></rk-card>
    <rk-card heading="Venues"><div class="one"><rk-donut size="112" ring="11" value="5" parts="#d9d9d9:200 #3ab54a:600 #c1272d:200"><rk-icon name="pin" style="width:14px;height:21px;color:#b0b0b3"></rk-icon></rk-donut></div></rk-card>
    <rk-card heading="Networking Devices"><div class="two">
      <rk-donut size="102" ring="10" value="7" parts="#d9d9d9:143 #3ab54a:571 #c1272d:286">Wi-Fi</rk-donut>
      <rk-donut size="102" ring="10" value="5" parts="#3ab54a:800 #c1272d:200">Switch</rk-donut></div></rk-card>
    <rk-card heading="Clients"><div class="two">
      <rk-donut size="102" ring="10" value="4" parts="#3ab54a:1000">Wi-Fi</rk-donut>
      <rk-donut size="102" ring="10" value="7" parts="#3ab54a:1000">Switch</rk-donut></div></rk-card>
    <rk-card><rk-actions></rk-actions></rk-card>
    <rk-card open class="map"><rk-map></rk-map></rk-card>
    <rk-card open class="chart"><rk-traffic></rk-traffic></rk-card>
    <rk-callout style="--x:13.2%">1</rk-callout>
    <rk-callout style="--x:33.8%">2</rk-callout>
    <rk-callout style="--x:55.3%">3</rk-callout>
    <rk-callout style="--x:76.9%">4</rk-callout>
    <rk-callout style="--x:92.4%">5</rk-callout>
    <rk-callout style="--x:23.4%;--y:156px">6</rk-callout>
  </div></main>
</div>`);
</script>
</body>
</html>
